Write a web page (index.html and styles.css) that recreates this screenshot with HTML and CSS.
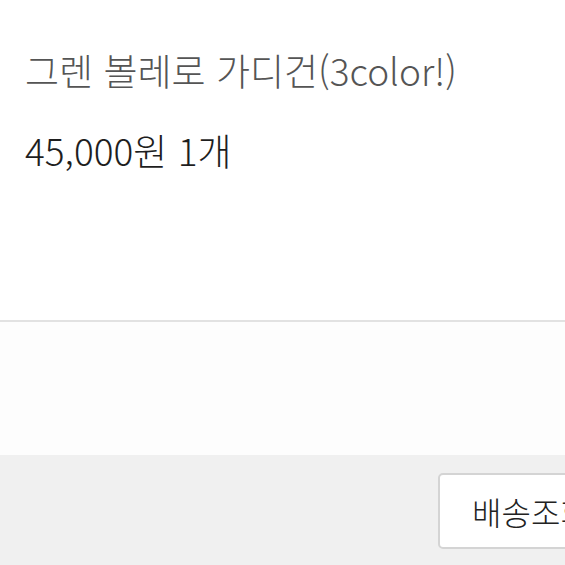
FILE: index.html
```html
<!DOCTYPE html>
<html lang="ko">
<head>
    <meta charset="UTF-8">
    <meta name="viewport" content="width=device-width, initial-scale=1.0">
    <title>주문 상품</title>
    <link rel="stylesheet" href="styles.css">
</head>
<body>
    <div class="item">
        <p class="item-name">그렌 볼레로 가디건(3color!)</p>
        <p class="item-price">45,000원 1개</p>
    </div>
    <div class="spacer"></div>
    <div class="actions">
        <button class="btn-track">배송조회</button>
    </div>
</body>
</html>
```

FILE: styles.css
```css
body {
    margin: 0;
    font-family: "Noto Sans CJK KR", "Noto Sans", sans-serif;
    font-weight: 300;
    background: #fff;
    overflow: hidden;
}
.item {
    height: 322px;
    padding: 0 25px;
    box-sizing: border-box;
    border-bottom: 2px solid #e2e2e2;
    background: #fff;
}
.item-name {
    margin: 0;
    padding-top: 45px;
    font-size: 37px;
    line-height: 50px;
    color: #555;
    white-space: nowrap;
}
.item-price {
    margin: 0;
    padding-top: 30px;
    font-size: 37px;
    line-height: 50px;
    color: #1e1e1e;
}
.spacer {
    height: 133px;
    background: #fdfdfd;
}
.actions {
    height: 110px;
    background: #f0f0f0;
    padding: 18px 0 0 438px;
    box-sizing: border-box;
    white-space: nowrap;
    overflow: hidden;
}
.btn-track {
    width: 170px;
    height: 76px;
    background: #fff;
    border: 2px solid #d4d4d4;
    border-radius: 5px;
    font-family: inherit;
    font-weight: 300;
    font-size: 32px;
    color: #222;
    text-align: left;
    padding: 0 0 0 32px;
}
```
